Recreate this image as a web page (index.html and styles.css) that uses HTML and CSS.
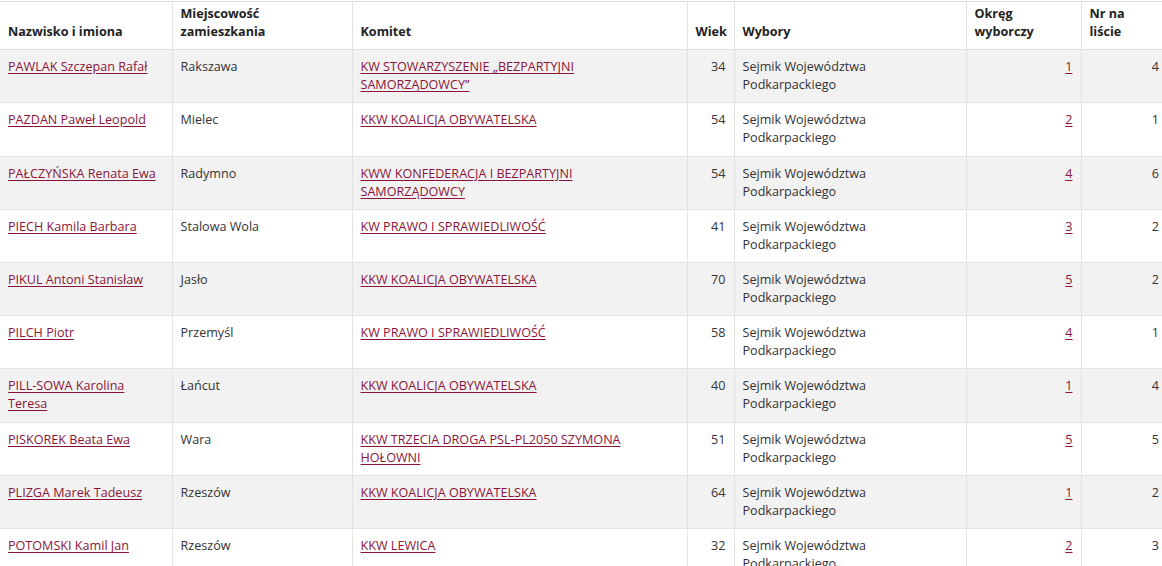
FILE: index.html
```html
<!DOCTYPE html>
<html lang="pl">
<head>
<meta charset="utf-8">
<title>Kandydaci</title>
<link rel="stylesheet" href="styles.css">
</head>
<body>
<div class="wrap">
<table class="results">
  <colgroup>
    <col class="c-name"><col class="c-city"><col class="c-com"><col class="c-age"><col class="c-el"><col class="c-dist"><col class="c-nr">
  </colgroup>
  <thead>
    <tr>
      <th>Nazwisko i imiona</th>
      <th>Miejscowość zamieszkania</th>
      <th>Komitet</th>
      <th class="num">Wiek</th>
      <th>Wybory</th>
      <th>Okręg wyborczy</th>
      <th>Nr na liście</th>
    </tr>
  </thead>
  <tbody>
    <tr>
      <td><a href="#">PAWLAK Szczepan Rafał</a></td><td>Rakszawa</td><td><a href="#">KW STOWARZYSZENIE „BEZPARTYJNI SAMORZĄDOWCY”</a></td><td class="num">34</td><td>Sejmik Województwa Podkarpackiego</td><td class="num"><a href="#">1</a></td><td class="num">4</td>
    </tr>
    <tr>
      <td><a href="#">PAZDAN Paweł Leopold</a></td><td>Mielec</td><td><a href="#">KKW KOALICJA OBYWATELSKA</a></td><td class="num">54</td><td>Sejmik Województwa Podkarpackiego</td><td class="num"><a href="#">2</a></td><td class="num">1</td>
    </tr>
    <tr>
      <td><a href="#">PAŁCZYŃSKA Renata Ewa</a></td><td>Radymno</td><td><a href="#">KWW KONFEDERACJA I BEZPARTYJNI SAMORZĄDOWCY</a></td><td class="num">54</td><td>Sejmik Województwa Podkarpackiego</td><td class="num"><a href="#">4</a></td><td class="num">6</td>
    </tr>
    <tr>
      <td><a href="#">PIECH Kamila Barbara</a></td><td>Stalowa Wola</td><td><a href="#">KW PRAWO I SPRAWIEDLIWOŚĆ</a></td><td class="num">41</td><td>Sejmik Województwa Podkarpackiego</td><td class="num"><a href="#">3</a></td><td class="num">2</td>
    </tr>
    <tr>
      <td><a href="#">PIKUL Antoni Stanisław</a></td><td>Jasło</td><td><a href="#">KKW KOALICJA OBYWATELSKA</a></td><td class="num">70</td><td>Sejmik Województwa Podkarpackiego</td><td class="num"><a href="#">5</a></td><td class="num">2</td>
    </tr>
    <tr>
      <td><a href="#">PILCH Piotr</a></td><td>Przemyśl</td><td><a href="#">KW PRAWO I SPRAWIEDLIWOŚĆ</a></td><td class="num">58</td><td>Sejmik Województwa Podkarpackiego</td><td class="num"><a href="#">4</a></td><td class="num">1</td>
    </tr>
    <tr>
      <td><a href="#">PILL-SOWA Karolina Teresa</a></td><td>Łańcut</td><td><a href="#">KKW KOALICJA OBYWATELSKA</a></td><td class="num">40</td><td>Sejmik Województwa Podkarpackiego</td><td class="num"><a href="#">1</a></td><td class="num">4</td>
    </tr>
    <tr>
      <td><a href="#">PISKOREK Beata Ewa</a></td><td>Wara</td><td><a href="#">KKW TRZECIA DROGA PSL-PL2050 SZYMONA HOŁOWNI</a></td><td class="num">51</td><td>Sejmik Województwa Podkarpackiego</td><td class="num"><a href="#">5</a></td><td class="num">5</td>
    </tr>
    <tr>
      <td><a href="#">PLIZGA Marek Tadeusz</a></td><td>Rzeszów</td><td><a href="#">KKW KOALICJA OBYWATELSKA</a></td><td class="num">64</td><td>Sejmik Województwa Podkarpackiego</td><td class="num"><a href="#">1</a></td><td class="num">2</td>
    </tr>
    <tr>
      <td><a href="#">POTOMSKI Kamil Jan</a></td><td>Rzeszów</td><td><a href="#">KKW LEWICA</a></td><td class="num">32</td><td>Sejmik Województwa Podkarpackiego</td><td class="num"><a href="#">2</a></td><td class="num">3</td>
    </tr>
  </tbody>
</table>
</div>
</body>
</html>
```
FILE: styles.css
```css
html, body {
  margin: 0;
  padding: 0;
  background: #fff;
  overflow: hidden;
}
body {
  font-family: "Open Sans", "Liberation Sans", sans-serif;
  font-size: 12.6px;
  line-height: 18.1px;
  color: #333;
}
.wrap {
  width: 100%;
  overflow: hidden;
  padding-top: 1px;
}
.results {
  width: 1167px;
  table-layout: fixed;
  border-collapse: collapse;
  border-top: 1px solid #ddd;
}
.c-name { width: 172px; }
.c-city { width: 180px; }
.c-com { width: 335px; }
.c-age { width: 47px; }
.c-el { width: 232px; }
.c-dist { width: 115px; }
.c-nr { width: 86px; }

.results th,
.results td {
  border-left: 1px solid #e3e3e3;
  vertical-align: top;
  text-align: left;
}
.results th:first-child,
.results td:first-child {
  border-left: 0;
}
.results th {
  font-weight: 700;
  color: #222;
  vertical-align: bottom;
  padding: 3px 8px 8px;
  border-bottom: 1px solid #ddd;
}
.results td {
  padding: 8px 8px 8px;
  border-top: 1px solid #e3e3e3;
}
.results tbody tr:first-child td {
  border-top: 0;
}
.results tbody tr:nth-child(odd) td {
  background: #f2f2f2;
}
.results .num {
  text-align: right;
}
.results a {
  color: #8a1538;
  text-decoration: underline;
  text-underline-offset: 2px;
}
```
